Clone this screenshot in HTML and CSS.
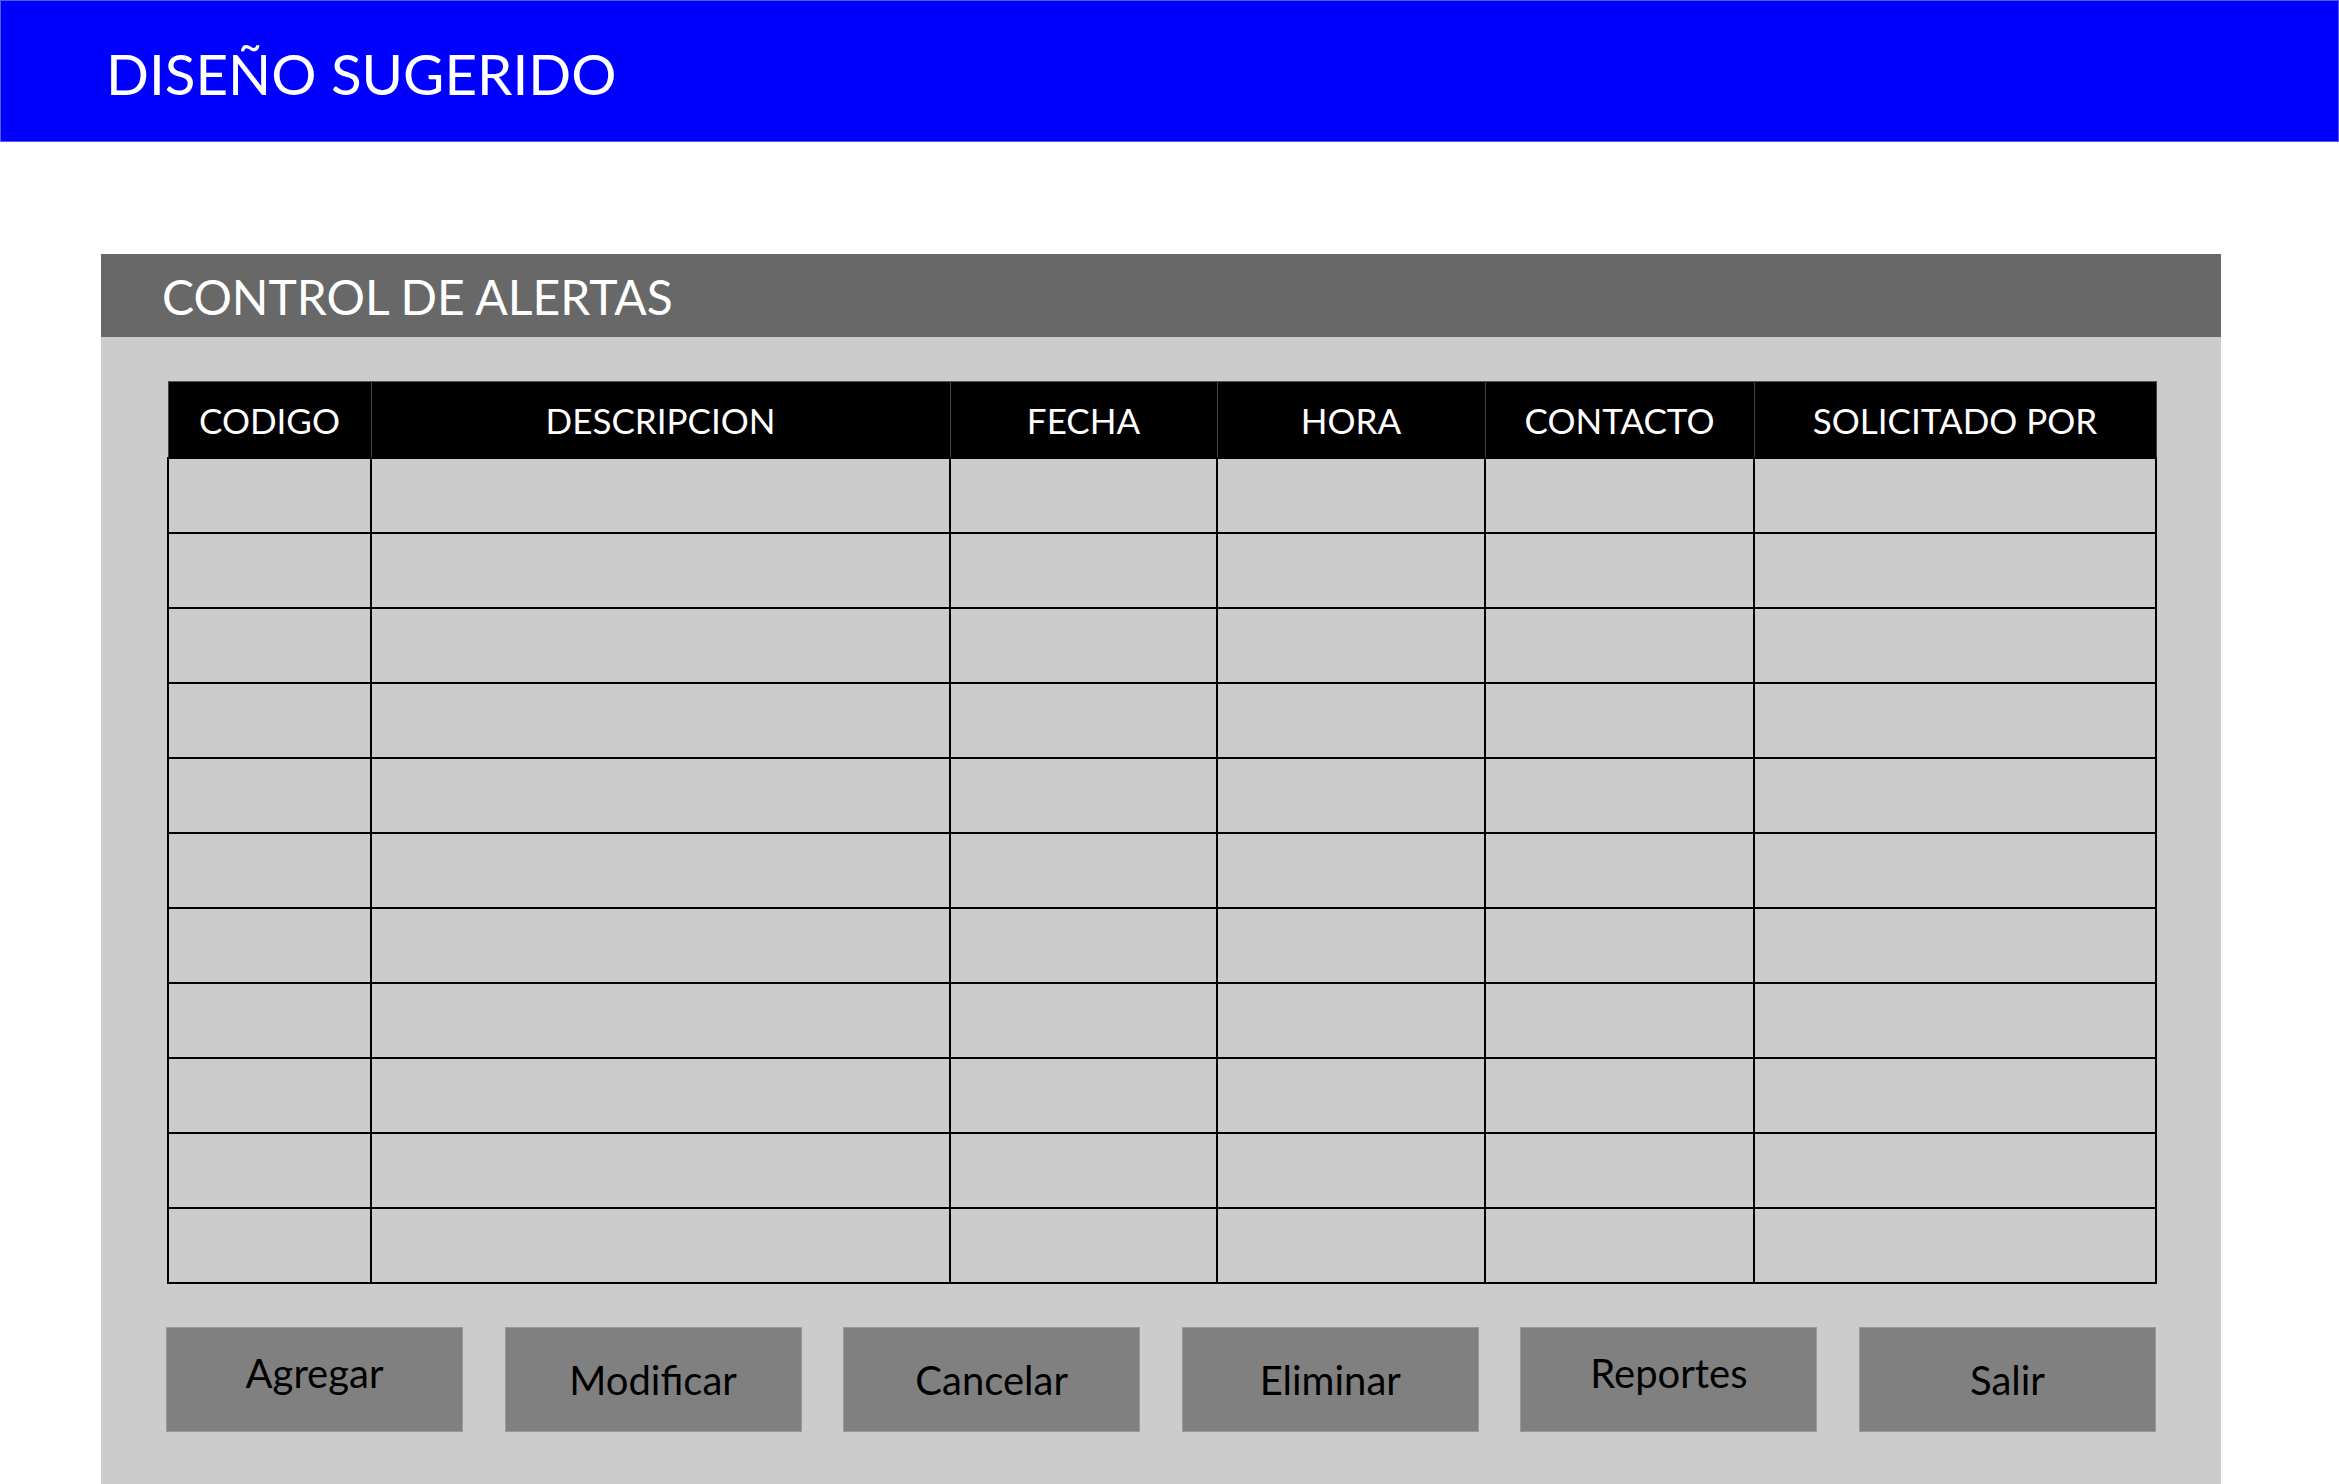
FILE: index.html
```html
<!DOCTYPE html>
<html lang="es">
<head>
<meta charset="utf-8">
<title>Diseño sugerido</title>
<link rel="stylesheet" href="styles.css">
</head>
<body>
<header class="topbar"><h1>DISEÑO SUGERIDO</h1></header>
<section class="panel">
  <div class="panel-head"><h2>CONTROL DE ALERTAS</h2></div>
  <div class="panel-body">
    <table class="grid">
      <colgroup>
        <col class="c1"><col class="c2"><col class="c3"><col class="c4"><col class="c5"><col class="c6">
      </colgroup>
      <thead>
        <tr><th>CODIGO</th><th>DESCRIPCION</th><th>FECHA</th><th>HORA</th><th>CONTACTO</th><th>SOLICITADO POR</th></tr>
      </thead>
      <tbody>
        <tr><td></td><td></td><td></td><td></td><td></td><td></td></tr>
        <tr><td></td><td></td><td></td><td></td><td></td><td></td></tr>
        <tr><td></td><td></td><td></td><td></td><td></td><td></td></tr>
        <tr><td></td><td></td><td></td><td></td><td></td><td></td></tr>
        <tr><td></td><td></td><td></td><td></td><td></td><td></td></tr>
        <tr><td></td><td></td><td></td><td></td><td></td><td></td></tr>
        <tr><td></td><td></td><td></td><td></td><td></td><td></td></tr>
        <tr><td></td><td></td><td></td><td></td><td></td><td></td></tr>
        <tr><td></td><td></td><td></td><td></td><td></td><td></td></tr>
        <tr><td></td><td></td><td></td><td></td><td></td><td></td></tr>
        <tr><td></td><td></td><td></td><td></td><td></td><td></td></tr>
      </tbody>
    </table>
    <div class="actions">
      <button class="btn btn-raised">Agregar</button>
      <button class="btn">Modificar</button>
      <button class="btn">Cancelar</button>
      <button class="btn">Eliminar</button>
      <button class="btn btn-raised">Reportes</button>
      <button class="btn">Salir</button>
    </div>
  </div>
</section>
</body>
</html>
```
FILE: styles.css
```css
html, body {
  margin: 0;
  padding: 0;
}
body {
  width: 2339px;
  height: 1484px;
  overflow: hidden;
  background: #ffffff;
  font-family: Lato, "Noto Sans", sans-serif;
}
.topbar {
  box-sizing: border-box;
  height: 142px;
  background: #0000ff;
  border: 1px solid #5a5af2;
  display: flex;
  align-items: center;
  padding-left: 105px;
}
.topbar h1 {
  margin: 0;
  color: #ffffff;
  font-size: 56.5px;
  font-weight: 400;
  line-height: 1;
  padding-top: 4px;
}
.panel {
  margin: 112px 0 0 101px;
  width: 2120px;
  height: 1230px;
  background: #cccccc;
}
.panel-head {
  height: 83px;
  background: #686868;
  display: flex;
  align-items: center;
  padding-left: 61px;
}
.panel-head h2 {
  margin: 0;
  color: #ffffff;
  font-size: 48px;
  font-weight: 400;
  line-height: 1;
  padding-top: 2px;
}
.panel-body {
  padding: 44px 0 0 66px;
}
.grid {
  border-collapse: collapse;
  table-layout: fixed;
  width: 1988px;
}
.c1 { width: 203px; }
.c2 { width: 579px; }
.c3 { width: 267px; }
.c4 { width: 268px; }
.c5 { width: 269px; }
.c6 { width: 402px; }
.grid th {
  height: 75px;
  padding: 0;
  background: #000000;
  color: #ffffff;
  font-size: 35px;
  font-weight: 400;
  text-align: center;
  border-top: 1px solid #555555;
  border-left: 1px solid #444444;
  border-right: 1px solid #444444;
}
.grid td {
  height: 73px;
  padding: 0;
  border: 2px solid #000000;
}
.actions {
  display: flex;
  justify-content: space-between;
  width: 1990px;
  margin: 43px 0 0 -1px;
}
.btn {
  box-sizing: border-box;
  width: 297px;
  height: 105px;
  background: #808080;
  border: 1px solid #999999;
  color: #000000;
  font-family: Lato, "Noto Sans", sans-serif;
  font-size: 40px;
  font-weight: 400;
  display: flex;
  align-items: center;
  justify-content: center;
  padding: 0;
}
.btn-raised {
  padding-bottom: 14px;
}
```
